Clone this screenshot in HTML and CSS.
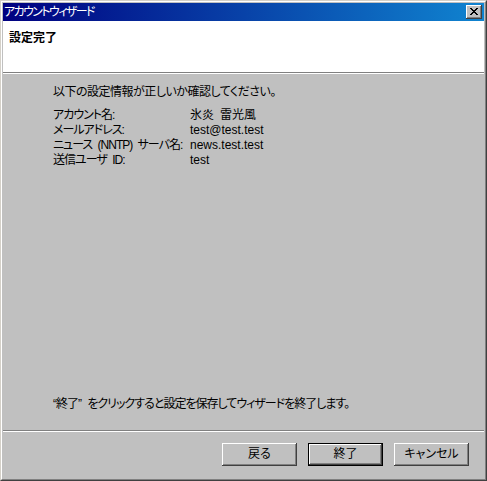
FILE: index.html
```html
<!DOCTYPE html>
<html lang="ja">
<head>
<meta charset="utf-8">
<title>アカウントウィザード</title>
<link rel="stylesheet" href="styles.css">
</head>
<body>
<div class="window">
  <div class="frame">
    <div class="titlebar">
      <span class="title">アカウントウィザード</span>
      <span class="close">
        <svg width="8" height="7" viewBox="0 0 8 7" shape-rendering="crispEdges"><path fill="#000" d="M0 0h2v1h-2z M6 0h2v1h-2z M1 1h2v1h-2z M5 1h2v1h-2z M2 2h4v1h-4z M3 3h2v1h-2z M2 4h4v1h-4z M1 5h2v1h-2z M5 5h2v1h-2z M0 6h2v1h-2z M6 6h2v1h-2z"/></svg>
      </span>
    </div>
    <div class="header">
      <h1 class="heading">設定完了</h1>
    </div>
    <div class="body">
      <p class="intro">以下の設定情報が正しいか確認してください。</p>
      <div class="info">
        <span class="label">アカウント名:</span><span class="value">氷炎&ensp;雷光風</span>
        <span class="label">メールアドレス:</span><span class="value">test@test.test</span>
        <span class="label">ニュース (NNTP) サーバ名:</span><span class="value">news.test.test</span>
        <span class="label">送信ユーザ ID:</span><span class="value">test</span>
      </div>
      <p class="note">“終了” をクリックすると設定を保存してウィザードを終了します。</p>
    </div>
    <div class="footer">
      <span class="btn">戻る</span>
      <span class="btn btn-default">終了</span>
      <span class="btn">キャンセル</span>
    </div>
  </div>
</div>
</body>
</html>
```
FILE: styles.css
```css
html, body {
  margin: 0;
  padding: 0;
}
body {
  background: #c0c0c0;
  font: 12px/15px "Liberation Sans", "Noto Sans CJK JP", sans-serif;
  font-feature-settings: "palt";
  color: #000;
}
.window {
  width: 487px;
  height: 481px;
  box-sizing: border-box;
  border: 1px solid;
  border-color: #d4d0c8 #404040 #404040 #d4d0c8;
}
.frame {
  height: 100%;
  box-sizing: border-box;
  border: 1px solid;
  border-color: #fff #808080 #808080 #fff;
  padding: 1px;
  display: flex;
  flex-direction: column;
}
.titlebar {
  height: 18px;
  flex: none;
  background: linear-gradient(90deg, #000080, #1084d0);
  display: flex;
  align-items: center;
  justify-content: space-between;
  padding: 0 2px 0 1px;
  color: #fff;
}
.title {
  line-height: 15px;
  letter-spacing: -1.6px;
}
.close {
  width: 16px;
  height: 14px;
  box-sizing: border-box;
  background: #c0c0c0;
  box-shadow: inset -1px -1px #404040, inset 1px 1px #fff, inset -2px -2px #808080;
  display: flex;
  align-items: center;
  justify-content: center;
  padding: 0 1px 1px 0;
}
.close svg {
  display: block;
}
.header {
  flex: none;
  background: #fff;
  border-bottom: 1px solid #808080;
  box-sizing: border-box;
  height: 52px;
  padding: 10px 0 0 6px;
}
.heading {
  margin: 0;
  font-size: 12px;
  line-height: 15px;
  font-weight: bold;
}
.body {
  flex: 1;
  border-top: 1px solid #fff;
  display: flex;
  flex-direction: column;
  padding: 11px 0 0 50px;
}
.intro {
  margin: 0 0 8px;
  letter-spacing: -0.5px;
}
.info {
  display: grid;
  grid-template-columns: 137px auto;
}
.label {
  white-space: nowrap;
  letter-spacing: -1px;
  word-spacing: 3px;
}
.value {
  white-space: nowrap;
}
.note {
  margin: auto 0 18px;
  letter-spacing: -1px;
  word-spacing: 4px;
  white-space: nowrap;
}
.footer {
  flex: none;
  border-top: 1px solid #808080;
  box-shadow: inset 0 1px #fff;
  padding: 12px 15px 12px 0;
  display: flex;
  justify-content: flex-end;
  gap: 11px;
}
.btn {
  width: 75px;
  height: 23px;
  box-sizing: border-box;
  display: flex;
  align-items: center;
  justify-content: center;
  background: #c0c0c0;
  box-shadow: inset -1px -1px #404040, inset 1px 1px #fff, inset -2px -2px #808080;
}
.btn-default {
  border: 1px solid #000;
}
```
